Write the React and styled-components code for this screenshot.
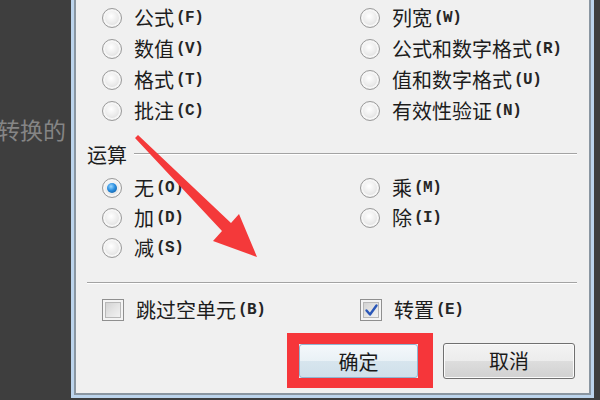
import React from 'react';
import styled, { createGlobalStyle, css } from 'styled-components';

const GlobalStyle = createGlobalStyle`
    html, body {
        margin: 0;
        padding: 0;
        background: #3e3e3e;
    }
    body {
        width: 600px;
        height: 400px;
        overflow: hidden;
        font-family: "Noto Sans CJK SC", "Noto Sans", sans-serif;
    }
`;

const Page = styled.div`
    position: relative;
    display: flex;
    width: 600px;
    height: 400px;
    overflow: hidden;
`;

const Backdrop = styled.div`
    width: 71px;
    flex-shrink: 0;
    overflow: hidden;
    padding-top: 115px;
    box-sizing: border-box;
`;

const BackdropText = styled.div`
    margin-left: -3px;
    white-space: nowrap;
    font-size: 23px;
    line-height: 28px;
    color: #858585;
`;

const Window = styled.div`
    width: 523px;
    height: 398px;
    flex-shrink: 0;
    box-sizing: border-box;
    border: 3px solid #bcd4ec;
    border-top: none;
`;

const Panel = styled.div`
    height: 100%;
    box-sizing: border-box;
    border: 2px solid #8a96a1;
    border-top: none;
    background: #f0f0f0;
    padding: 0 12px 0 11px;
    display: flex;
    flex-direction: column;
`;

const OptionGrid = styled.div`
    display: grid;
    grid-template-columns: 258px 1fr;
    grid-auto-rows: ${p => p.row}px;
    padding-left: 15px;
    margin-top: ${p => p.top}px;
`;

const Option = styled.div`
    display: flex;
    align-items: center;
    gap: 12px;
    white-space: nowrap;
`;

const Radio = styled.span`
    position: relative;
    width: 20px;
    height: 20px;
    flex-shrink: 0;
    box-sizing: border-box;
    border-radius: 50%;
    border: 1px solid #9a9a9a;
    background: radial-gradient(circle at 45% 40%, #ffffff 0%, #ececec 45%, #cfcfcf 100%);
    box-shadow: inset 0 0 0 2px #f6f6f6;

    ${p => p.checked && css`
        &::after {
            content: '';
            position: absolute;
            left: 4px;
            top: 4px;
            width: 10px;
            height: 10px;
            border-radius: 50%;
            background: radial-gradient(circle at 40% 35%, #9bd8ff 0%, #2a8ee0 45%, #0b4d8c 100%);
        }
    `}
`;

const Box = styled.span`
    display: grid;
    place-items: center;
    width: 22px;
    height: 22px;
    flex-shrink: 0;
    box-sizing: border-box;
    border: 1px solid #8f8f8f;
    background: linear-gradient(135deg, #cbcbcb 0%, #e4e4e4 50%, #f8f8f8 100%);
    box-shadow: inset 0 0 0 2px #f4f4f4, inset 0 0 0 3px #b8b8b8;
`;

const Label = styled.span`
    display: flex;
    align-items: center;
    font-size: 20px;
    line-height: 24px;
    color: #1c1c1c;
`;

const Key = styled.span`
    font-family: "Liberation Mono", monospace;
    font-size: 16px;
    font-weight: bold;
    color: #262626;
    margin-left: 2px;
    letter-spacing: -0.5px;
`;

const Heading = styled.div`
    display: flex;
    align-items: center;
    height: 24px;
    margin-top: 17px;
`;

const HeadingText = styled.span`
    font-size: 20px;
    line-height: 24px;
    color: #1c1c1c;
`;

const Rule = styled.div`
    flex: ${p => p.grow ? 1 : 'none'};
    height: 1px;
    background: #a3a3a3;
    border-bottom: 1px solid #ffffff;
    margin-left: ${p => p.indent || 0}px;
    margin-top: ${p => p.top || 0}px;
`;

const ButtonRow = styled.div`
    display: flex;
    justify-content: flex-end;
    align-items: center;
    gap: 10px;
    margin-top: 8px;
    padding-right: 2px;
`;

const Highlight = styled.div`
    border-style: solid;
    border-color: #f6363a;
    border-width: 11px 15px 10px 12px;
`;

const Button = styled.div`
    display: grid;
    place-items: center;
    box-sizing: border-box;
    width: ${p => p.w}px;
    height: ${p => p.h}px;
    font-size: 20px;
    color: #1a1a1a;
    border-radius: 3px;
    ${p => p.primary ? css`
        border: 1px solid #8fb6d2;
        background: linear-gradient(#f4f8fb 0%, #e9f1f6 50%, #d7e5ee 51%, #cfe0ea 100%);
    ` : css`
        border: 1px solid #707070;
        background: linear-gradient(#f3f3f3 0%, #ececec 50%, #dddddd 51%, #d1d1d1 100%);
        box-shadow: inset 0 0 0 1px #fbfbfb;
    `}
`;

const Overlay = styled.svg`
    position: absolute;
    left: 0;
    top: 0;
    pointer-events: none;
`;

const Check = () => (
    <svg width="15" height="15" viewBox="0 0 15 15">
        <path d="M2.5 7.5 L6 11.5 L12.5 2.5" fill="none" stroke="#2a57b8" strokeWidth="2.4" strokeLinecap="round" strokeLinejoin="round" />
    </svg>
);

const pasteOptions = [
    ['公式', 'F'], ['列宽', 'W'],
    ['数值', 'V'], ['公式和数字格式', 'R'],
    ['格式', 'T'], ['值和数字格式', 'U'],
    ['批注', 'C'], ['有效性验证', 'N'],
];

const operations = [
    ['无', 'O', true], ['乘', 'M'],
    ['加', 'D'], ['除', 'I'],
    ['减', 'S'],
];

const RadioOption = ({ text, k, checked }) => (
    <Option>
        <Radio checked={ checked } />
        <Label>{ text }<Key>({ k })</Key></Label>
    </Option>
);

const App = () => (
    <Page>
        <GlobalStyle />
        <Backdrop>
            <BackdropText>转换的</BackdropText>
        </Backdrop>
        <Window>
            <Panel>
                <OptionGrid row={ 31 } top={ 2 }>
                    { pasteOptions.map(([t, k]) => <RadioOption key={ k } text={ t } k={ k } />) }
                </OptionGrid>

                <Heading>
                    <HeadingText>运算</HeadingText>
                    <Rule grow indent={ 7 } top={ -3 } />
                </Heading>

                <OptionGrid row={ 30 } top={ 6 }>
                    { operations.map(([t, k, c]) => <RadioOption key={ k } text={ t } k={ k } checked={ c } />) }
                </OptionGrid>

                <Rule top={ 19 } />

                <OptionGrid row={ 30 } top={ 11 }>
                    <Option>
                        <Box />
                        <Label>跳过空单元<Key>(B)</Key></Label>
                    </Option>
                    <Option>
                        <Box><Check /></Box>
                        <Label>转置<Key>(E)</Key></Label>
                    </Option>
                </OptionGrid>

                <ButtonRow>
                    <Highlight>
                        <Button primary w={ 119 } h={ 34 }>确定</Button>
                    </Highlight>
                    <Button w={ 132 } h={ 36 }>取消</Button>
                </ButtonRow>
            </Panel>
        </Window>

        <Overlay width="600" height="400" viewBox="0 0 600 400">
            <polygon
                points="138,135 231,223 239,214 257,257 213,241 222,231 135,138"
                fill="#f4393a"
            />
        </Overlay>
    </Page>
);

export default App;
